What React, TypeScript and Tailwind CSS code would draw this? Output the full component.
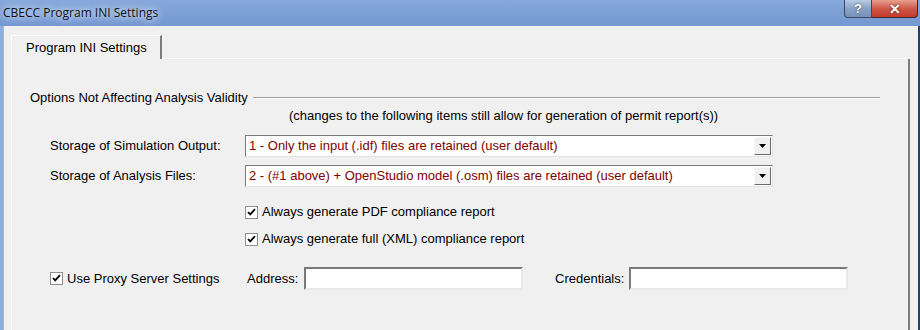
import React from "react";

const Combo = ({ value }: { value: string }) => (
  <div className="flex h-[22px] w-[528px] border border-t-[#7a7a7a] border-l-[#7a7a7a] border-r-[#e3e3e3] border-b-[#e3e3e3] bg-white">
    <div className="flex-1 pl-[3px] pt-[2px] text-[13px] leading-[16px] text-[#800000] whitespace-nowrap">{value}</div>
    <div className="m-[1px] flex w-[17px] items-center justify-center border border-t-[#f8f8f8] border-l-[#f8f8f8] border-r-[#696969] border-b-[#696969] bg-[#f0f0f0]">
      <svg width="7" height="4" viewBox="0 0 7 4">
        <path d="M0 0h7L3.5 4z" fill="#000" />
      </svg>
    </div>
  </div>
);

const Check = () => (
  <div className="flex h-[13px] w-[13px] shrink-0 items-center justify-center border border-[#8e8f8f] bg-white">
    <svg width="9" height="9" viewBox="0 0 9 9">
      <path d="M1 4l2.2 2.4L8 1.2" fill="none" stroke="#000" strokeWidth="1.8" />
    </svg>
  </div>
);

const TextBox = ({ width }: { width: string }) => (
  <div className={`h-[23px] ${width} shrink-0 border-2 border-t-[#7a7a7a] border-l-[#7a7a7a] border-r-[#e8e8e8] border-b-[#e8e8e8] bg-white`} />
);

export default function App() {
  return (
    <div className="flex h-[330px] w-[920px] flex-col overflow-hidden bg-[#7ea1d6] font-['Liberation_Sans',Arial,sans-serif] text-[13px] text-black">
      {/* title bar */}
      <div className="flex h-[26px] items-start justify-between bg-[linear-gradient(to_bottom,#86a8db,#7397d1)]">
        <div className="pl-[3px] pt-[5px] font-['Open_Sans',sans-serif] text-[12px] leading-[16px] text-[#111] [text-shadow:0_0_6px_#e6eefa,0_0_10px_#dfe9f8]">
          CBECC Program INI Settings
        </div>
        <div className="mr-[2px] flex h-[18px]">
          <div className="flex w-[28px] items-center justify-center rounded-bl-[4px] border border-t-0 border-[#3a4a66] bg-[linear-gradient(to_bottom,#b9cbe4,#8aa2c6_50%,#7891ba)] text-[13px] font-bold leading-none text-white [text-shadow:0_0_2px_#333]">
            ?
          </div>
          <div className="flex w-[46px] items-center justify-center rounded-br-[4px] border border-l-0 border-t-0 border-[#3a2a2a] bg-[linear-gradient(to_bottom,#e8a08f,#d0584a_50%,#c33a2c)] text-[14px] font-bold leading-none text-white [text-shadow:0_0_2px_#400]">
            ✕
          </div>
        </div>
      </div>

      {/* client */}
      <div className="flex flex-1 border-l-[3px] border-r-[2px] border-l-[#8fb0de] border-r-[#2d3e5c]">
        <div className="flex flex-1 flex-col border-l border-[#a9b6c9] bg-[#f0f0f0] pl-[7px] pr-[8px] pt-[9px]">
          {/* tab strip */}
          <div className="flex h-[24px] items-end">
            <div className="flex h-[24px] w-[151px] items-center border-l border-t border-r-2 border-l-white border-t-white border-r-[#7d7d7d] pl-[14px]">
              Program INI Settings
            </div>
            <div className="h-px flex-1 bg-white" />
            <div className="h-[24px] w-[2px]" />
          </div>

          {/* panel */}
          <div className="flex flex-1 flex-col border-l border-r-2 border-l-white border-r-[#7d7d7d]">
            <div className="mt-[31px] flex h-[16px] items-center pl-[18px] pr-[28px]">
              <span className="whitespace-nowrap">Options Not Affecting Analysis Validity</span>
              <div className="ml-[5px] h-[2px] flex-1 border-b border-t border-b-white border-t-[#a0a0a0]" />
            </div>
            <div className="h-[16px] pl-[277px] whitespace-nowrap">
              (changes to the following items still allow for generation of permit report(s))
            </div>

            <div className="mt-[13px] flex items-center pl-[38px]">
              <div className="w-[195px] whitespace-nowrap">Storage of Simulation Output:</div>
              <Combo value="1 - Only the input (.idf) files are retained (user default)" />
            </div>
            <div className="mt-[8px] flex items-center pl-[38px]">
              <div className="w-[195px] whitespace-nowrap">Storage of Analysis Files:</div>
              <Combo value="2 - (#1 above) + OpenStudio model (.osm) files are retained (user default)" />
            </div>

            <div className="mt-[17px] flex h-[16px] items-center gap-[4px] pl-[233px]">
              <Check />
              <span>Always generate PDF compliance report</span>
            </div>
            <div className="mt-[11px] flex h-[16px] items-center gap-[4px] pl-[233px]">
              <Check />
              <span>Always generate full (XML) compliance report</span>
            </div>

            <div className="mt-[20px] flex items-center pl-[38px]">
              <Check />
              <span className="ml-[4px] w-[180px] whitespace-nowrap">Use Proxy Server Settings</span>
              <span className="w-[57px]">Address:</span>
              <TextBox width="w-[219px]" />
              <span className="ml-[32px] w-[74px]">Credentials:</span>
              <TextBox width="w-[219px]" />
            </div>
          </div>
        </div>
      </div>
    </div>
  );
}
